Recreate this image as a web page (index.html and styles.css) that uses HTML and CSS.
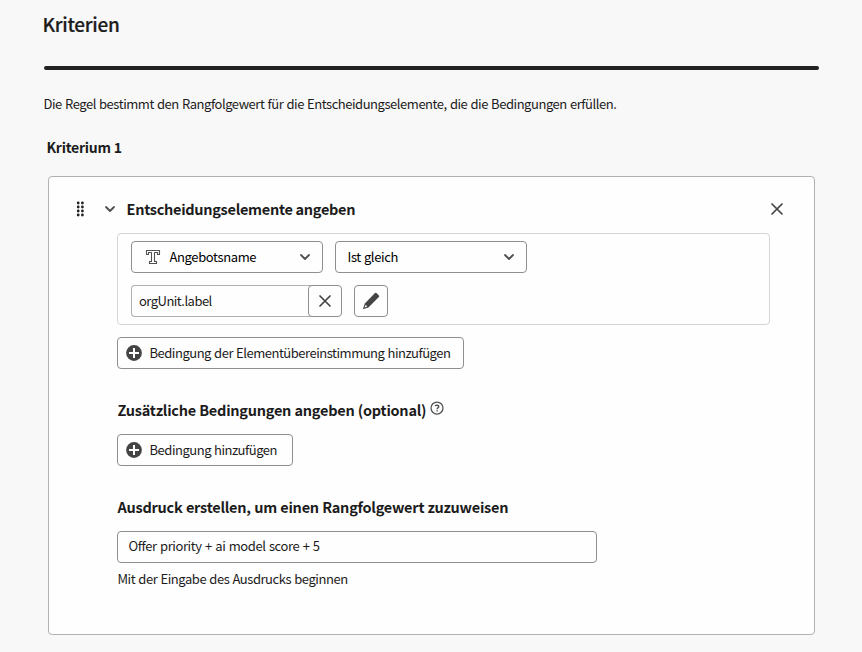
FILE: index.html
```html
<!DOCTYPE html>
<html lang="de">
<head>
<meta charset="utf-8">
<title>Kriterien</title>
<link rel="stylesheet" href="styles.css">
</head>
<body>
<h1 class="title"><span class="t-title">Kriterien</span></h1>
<div class="rule"></div>
<p class="intro"><span class="t-intro">Die Regel bestimmt den Rangfolgewert für die Entscheidungselemente, die die Bedingungen erfüllen.</span></p>
<h2 class="criterion"><span class="t-criterion">Kriterium 1</span></h2>
<section class="card">
  <header class="card-head">
    <svg class="grip" width="8" height="16" viewBox="0 0 8 16"><g fill="#222"><circle cx="2.2" cy="2" r="1.4"/><circle cx="6.4" cy="2" r="1.4"/><circle cx="2.2" cy="6" r="1.4"/><circle cx="6.4" cy="6" r="1.4"/><circle cx="2.2" cy="10" r="1.4"/><circle cx="6.4" cy="10" r="1.4"/><circle cx="2.2" cy="14" r="1.4"/><circle cx="6.4" cy="14" r="1.4"/></g></svg>
    <svg class="chevron" width="12" height="8" viewBox="0 0 12 8"><path d="M2 2l4 4 4-4"/></svg>
    <h3 class="heading"><span class="t-specify">Entscheidungselemente angeben</span></h3>
    <svg class="close" width="14" height="14" viewBox="0 0 14 14"><path d="M2 2l10 10M12 2L2 12"/></svg>
  </header>
  <div class="content">
    <div class="group">
      <div class="row">
        <div class="select select-name">
          <svg class="type" width="16" height="16" viewBox="0 0 16 16"><path d="M1.5 1.5h13v4h-2v-2H9.5v9h2v2h-7v-2h2v-9H3.5v2h-2z"/></svg>
          <span class="t-name">Angebotsname</span>
          <svg class="chevron" width="12" height="8" viewBox="0 0 12 8"><path d="M2 2l4 4 4-4"/></svg>
        </div>
        <div class="select">
          <span class="t-equal">Ist gleich</span>
          <svg class="chevron" width="12" height="8" viewBox="0 0 12 8"><path d="M2 2l4 4 4-4"/></svg>
        </div>
      </div>
      <div class="row">
        <div class="value">
          <div class="value-text"><span class="t-label">orgUnit.label</span></div>
          <div class="icon-button clear"><svg class="close" width="14" height="14" viewBox="0 0 14 14"><path d="M2 2l10 10M12 2L2 12"/></svg></div>
        </div>
        <div class="icon-button"><svg width="18" height="18" viewBox="0 0 18 18"><path fill="#444" fill-rule="evenodd" d="M13 1.1a1 1 0 0 1 1.4 0l2.5 2.5a1 1 0 0 1 0 1.4L6.4 15.4 1.6 17a.4.4 0 0 1-.5-.5l1.7-4.9zM3.7 12.8l-1.2 2.7 2.8-1.1z"/></svg></div>
      </div>
    </div>
    <div class="button button-match">
      <svg width="16" height="16" viewBox="0 0 16 16"><circle cx="8" cy="8" r="7.9" fill="#444"/><path d="M8 3v10M3 8h10" stroke="#fff" stroke-width="2"/></svg>
      <span class="t-match">Bedingung der Elementübereinstimmung hinzufügen</span>
    </div>
    <h3 class="heading extra"><span class="t-extra">Zusätzliche Bedingungen angeben (optional)</span>
      <svg width="14" height="14" viewBox="0 0 14 14" fill="none" stroke="#505050"><circle cx="7" cy="7" r="6" stroke-width="1.25"/><path d="M5.3 5.1C5.6 4 8.8 3.7 8.8 5.5 8.8 6.7 7.1 6.8 7.1 8.3M7.1 9.2v1.4" stroke-width="1.4"/></svg>
    </h3>
    <div class="button button-add">
      <svg width="16" height="16" viewBox="0 0 16 16"><circle cx="8" cy="8" r="7.9" fill="#444"/><path d="M8 3v10M3 8h10" stroke="#fff" stroke-width="2"/></svg>
      <span class="t-add">Bedingung hinzufügen</span>
    </div>
    <h3 class="heading expression-heading"><span class="t-expression">Ausdruck erstellen, um einen Rangfolgewert zuzuweisen</span></h3>
    <div class="expression"><span class="t-value">Offer priority + ai model score + 5</span></div>
    <p class="help"><span class="t-help">Mit der Eingabe des Ausdrucks beginnen</span></p>
  </div>
</section>
</body>
</html>
```
FILE: styles.css
```css
* { box-sizing: border-box; }
body {
  margin: 0;
  padding: 11px 43px 0;
  height: 652px;
  background: #f8f8f8;
  color: #1c1c1c;
  font: 13px/20px "Noto Sans CJK SC", "Noto Sans", sans-serif;
  overflow: hidden;
}
h1, h2, h3, p { margin: 0; }
span { white-space: nowrap; }
svg { display: block; flex: none; }
.title { margin-left: -0.5px; font-size: 19px; line-height: 26px; font-weight: 500; -webkit-text-stroke: 0.2px #222; }
.rule { height: 4px; margin: 29px 0 0 1px; width: 775px; border-radius: 2px; background: #222; }
.intro { margin: 24px 0 0 0.5px; }
.criterion { margin: 22px 0 0 3.5px; font-size: 14px; line-height: 22px; font-weight: 700; }
.card {
  width: 767px;
  height: 459px;
  margin: 18px 0 0 5px;
  border: 1px solid #b1b1b1;
  border-radius: 4px;
  background: #fefefe;
}
.card-head { display: flex; align-items: center; height: 24px; margin-top: 20px; padding: 0 30px 0 27px; }
.card-head .chevron { margin: 0 10.5px 0 20px; }
.card-head .close { margin-left: auto; }
.heading { font-size: 14.5px; line-height: 24px; font-weight: 700; }
.chevron { fill: none; stroke: #505050; stroke-width: 1.8; stroke-linecap: round; stroke-linejoin: round; }
.close { fill: none; stroke: #444; stroke-width: 1.7; stroke-linecap: round; }
.type { fill: none; stroke: #505050; stroke-width: 1.1; stroke-linejoin: round; margin-right: 8.5px; }
.content { padding-left: 68px; }
.group {
  display: flex;
  flex-direction: column;
  gap: 12px;
  width: 653px;
  height: 92px;
  margin-top: 12px;
  padding: 7px 13px;
  border: 1px solid #d5d5d5;
  border-radius: 4px;
}
.row { display: flex; gap: 12px; }
.select, .button, .icon-button, .value-text, .expression {
  display: flex;
  align-items: center;
  height: 32px;
  border: 1px solid #8e8e8e;
  border-radius: 4px;
  background: #fefefe;
}
.select { width: 192px; padding: 0 11px 0 11.5px; color: #000; }
.select-name { padding-left: 13px; }
.select .chevron { margin-left: auto; }
.value { display: flex; width: 211px; }
.value-text { width: 181px; margin-right: -4px; padding-left: 7px; border-color: #b1b1b1; border-right: 0; border-radius: 4px 0 0 4px; }
.icon-button { width: 34px; justify-content: center; }
.button { padding-left: 8px; gap: 7.5px; }
.button-match { width: 347px; margin-top: 12px; }
.extra { display: flex; gap: 4px; margin-top: 29px; padding-left: 0.5px; }
.extra svg { margin-top: 3px; }
.button-add { width: 176px; margin-top: 12px; }
.expression-heading { margin-top: 29px; padding-left: 0.5px; }
.expression { width: 480px; margin-top: 12px; padding: 0 0 2px 10.5px; }
.help { margin: 6px 0 0 0.5px; }

/* Tracking per text run */
.t-title { letter-spacing: -0.3px; }
.t-intro { letter-spacing: -0.46px; word-spacing: 0.7px; }
.t-criterion { letter-spacing: -0.25px; }
.t-specify { letter-spacing: -0.29px; }
.t-name { letter-spacing: -0.38px; }
.t-equal { letter-spacing: -0.38px; word-spacing: 0.5px; }
.t-label { letter-spacing: -0.52px; }
.t-match { letter-spacing: -0.48px; word-spacing: 0.7px; }
.t-extra { letter-spacing: -0.25px; word-spacing: 0.3px; }
.t-add { letter-spacing: -0.47px; word-spacing: 0.5px; }
.t-expression { letter-spacing: -0.24px; word-spacing: 0.3px; }
.t-value { letter-spacing: -0.41px; word-spacing: 0.9px; }
.t-help { letter-spacing: -0.45px; word-spacing: 0.7px; }
```
